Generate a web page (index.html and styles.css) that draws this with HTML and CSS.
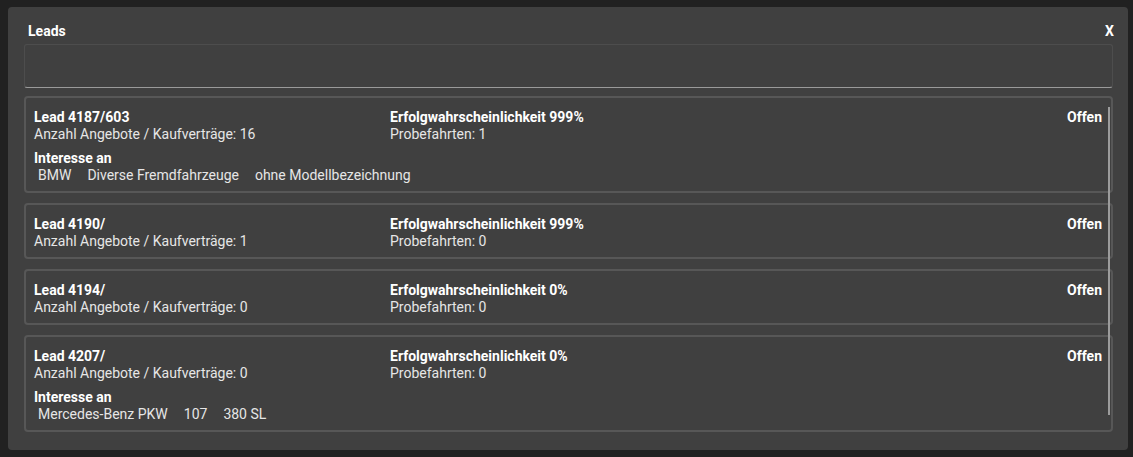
FILE: index.html
```html
<!DOCTYPE html>
<html lang="de">
<head>
<meta charset="utf-8">
<title>Leads</title>
<link rel="stylesheet" href="styles.css">
</head>
<body>
<div class="panel">
  <div class="header">
    <span class="title">Leads</span>
    <span class="close">X</span>
  </div>
  <div class="search"></div>
  <div class="list">
    <div class="card">
      <div class="row">
        <div class="col">
          <div class="b">Lead 4187/603</div>
          <div>Anzahl Angebote / Kaufverträge: 16</div>
        </div>
        <div class="col">
          <div class="b">Erfolgwahrscheinlichkeit 999%</div>
          <div>Probefahrten: 1</div>
        </div>
        <div class="col right"><div class="b">Offen</div></div>
      </div>
      <div class="interest">
        <div class="b">Interesse an</div>
        <div class="items"><span>BMW</span><span>Diverse Fremdfahrzeuge</span><span>ohne Modellbezeichnung</span></div>
      </div>
    </div>
    <div class="card">
      <div class="row">
        <div class="col">
          <div class="b">Lead 4190/</div>
          <div>Anzahl Angebote / Kaufverträge: 1</div>
        </div>
        <div class="col">
          <div class="b">Erfolgwahrscheinlichkeit 999%</div>
          <div>Probefahrten: 0</div>
        </div>
        <div class="col right"><div class="b">Offen</div></div>
      </div>
    </div>
    <div class="card">
      <div class="row">
        <div class="col">
          <div class="b">Lead 4194/</div>
          <div>Anzahl Angebote / Kaufverträge: 0</div>
        </div>
        <div class="col">
          <div class="b">Erfolgwahrscheinlichkeit 0%</div>
          <div>Probefahrten: 0</div>
        </div>
        <div class="col right"><div class="b">Offen</div></div>
      </div>
    </div>
    <div class="card">
      <div class="row">
        <div class="col">
          <div class="b">Lead 4207/</div>
          <div>Anzahl Angebote / Kaufverträge: 0</div>
        </div>
        <div class="col">
          <div class="b">Erfolgwahrscheinlichkeit 0%</div>
          <div>Probefahrten: 0</div>
        </div>
        <div class="col right"><div class="b">Offen</div></div>
      </div>
      <div class="interest">
        <div class="b">Interesse an</div>
        <div class="items"><span>Mercedes-Benz PKW</span><span>107</span><span>380 SL</span></div>
      </div>
    </div>
    <div class="thumb"></div>
  </div>
</div>
</body>
</html>
```
FILE: styles.css
```css
html, body {
  margin: 0;
  padding: 0;
  background: #212121;
}
body {
  font-family: Roboto, "Liberation Sans", sans-serif;
  font-size: 14px;
  line-height: 17px;
  color: #e6e6e6;
}
.panel {
  box-sizing: border-box;
  margin: 7px 5px 0 8px;
  height: 443px;
  background: #404040;
  border-radius: 4px;
  padding: 16px 15px 17px 16px;
  display: flex;
  flex-direction: column;
}
.header {
  display: flex;
  justify-content: space-between;
  align-items: center;
  padding: 0 0 0 4px;
  margin-right: -1px;
  height: 17px;
  margin-bottom: 4px;
  font-weight: 700;
  color: #fff;
}
.search {
  box-sizing: border-box;
  height: 44px;
  border: 1px solid #4d4d4d;
  border-bottom-color: #9a9a9a;
  border-radius: 3px;
  margin-bottom: 8px;
}
.list {
  position: relative;
  display: flex;
  flex-direction: column;
  gap: 10px;
}
.card {
  border: 2px solid #575757;
  border-radius: 4px;
  padding: 11px 9px 7px 8px;
}
.row {
  display: grid;
  grid-template-columns: 1fr 1fr 1fr;
}
.col.right {
  text-align: right;
}
.b {
  font-weight: 700;
  color: #fff;
}
.interest {
  margin-top: 7px;
}
.items {
  display: flex;
  gap: 16px;
  padding-left: 4px;
}
.thumb {
  position: absolute;
  right: 3px;
  top: 11px;
  bottom: 17px;
  width: 2px;
  background: #9c9c9c;
}
```
